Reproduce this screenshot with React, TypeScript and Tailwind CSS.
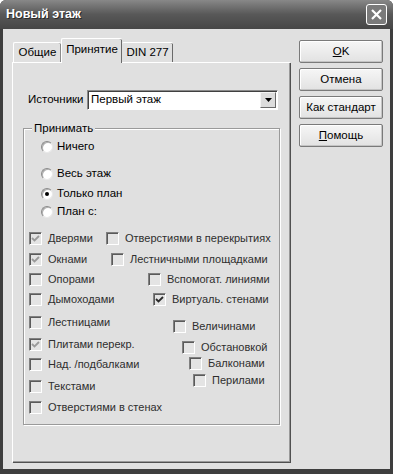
import React from "react";

type BoxProps = { label: string; checked?: boolean; strong?: boolean; className?: string };

const CheckBox: React.FC<BoxProps> = ({ label, checked, strong, className = "" }) => (
    <div className={`flex h-[13px] items-center gap-[6px] whitespace-nowrap ${className}`}>
        <span className="flex h-[13px] w-[13px] shrink-0 items-center justify-center border border-t-[#808080] border-l-[#808080] border-r-white border-b-white bg-[#e4e4e4] shadow-[inset_1px_1px_0_#5a5a5a]">
            {checked && (
                <svg width="9" height="9" viewBox="0 0 9 9">
                    <path d="M1 4 L3.5 6.5 L8 2" fill="none" stroke={strong ? "#2a2a2a" : "#9a9a9a"} strokeWidth="1.8" />
                </svg>
            )}
        </span>
        <span className="text-[11px] leading-none text-[#2e2e2e]">{label}</span>
    </div>
);

const Radio: React.FC<BoxProps> = ({ label, checked, className = "" }) => (
    <div className={`flex h-[12px] items-center gap-[4px] whitespace-nowrap ${className}`}>
        <span className="flex h-[12px] w-[12px] shrink-0 items-center justify-center rounded-full border border-t-[#8a8a8a] border-l-[#8a8a8a] border-r-[#e8e8e8] border-b-[#e8e8e8] bg-white shadow-[inset_1px_1px_0_#b0b0b0]">
            {checked && <span className="h-[4px] w-[4px] rounded-full bg-black" />}
        </span>
        <span className="text-[11.5px] leading-none text-black">{label}</span>
    </div>
);

const Btn: React.FC<{ children: React.ReactNode }> = ({ children }) => (
    <button className="flex h-[23px] w-[84px] items-center justify-center rounded-[2px] border border-[#7a7a7a] bg-gradient-to-b from-[#f6f6f6] to-[#e2e2e2] text-[11.5px] text-black shadow-[inset_-1px_-1px_0_#c4c4c4,inset_1px_1px_0_#fff]">
        {children}
    </button>
);

export default function App() {
    return (
        <div className="flex h-[474px] w-[393px] flex-col overflow-hidden rounded-t-[6px] bg-[#3e3e3e] font-['Liberation_Sans',Arial,sans-serif]">
            <div className="flex h-[29px] shrink-0 items-center justify-between bg-gradient-to-b from-[#888888] via-[#585858] to-[#464646] pl-[6px] pr-[6px]">
                <span className="text-[12.5px] font-bold text-white [text-shadow:1px_1px_0_#2a2a2a]">Новый этаж</span>
                <span className="flex h-[21px] w-[21px] items-center justify-center rounded-[3px] border border-white bg-[#7a7a7a]">
                    <svg width="13" height="13" viewBox="0 0 13 13">
                        <path d="M2 2 L11 11 M11 2 L2 11" stroke="#fff" strokeWidth="2.2" />
                    </svg>
                </span>
            </div>

            <div className="mx-[3px] mb-[5px] flex flex-1 gap-[9px] bg-[#e0e0e0] pl-[9px] pr-[6px] pt-[9px] pb-[7px]">
                <div className="flex w-[278px] flex-col">
                    <div className="flex h-[24px] items-end pl-[1px]">
                        <div className="flex h-[20px] w-[48px] items-center justify-center rounded-t-[2px] border-l border-t border-white shadow-[inset_-1px_0_0_#8a8a8a] text-[11.5px]">
                            Общие
                        </div>
                        <div className="relative z-10 -mb-[1px] flex h-[25px] w-[61px] items-center justify-center rounded-t-[2px] border-l border-t border-white bg-[#e0e0e0] pb-[3px] shadow-[inset_-1px_0_0_#6a6a6a] text-[11.5px]">
                            Принятие
                        </div>
                        <div className="flex h-[20px] w-[51px] items-center justify-center rounded-t-[2px] border-t border-white shadow-[inset_-1px_0_0_#6a6a6a] text-[11.5px]">
                            DIN 277
                        </div>
                    </div>

                    <div className="flex flex-1 flex-col border-l border-t border-white px-[10px] shadow-[inset_-1px_-1px_0_#9a9a9a,1px_1px_0_#505050]">
                        <div className="mt-[27px] flex items-center">
                            <span className="ml-[5px] w-[59px] text-[11.5px]">Источники</span>
                            <div className="flex h-[20px] w-[191px] items-center border border-t-[#8a8a8a] border-l-[#8a8a8a] border-r-white border-b-white bg-white shadow-[inset_1px_1px_0_#404040]">
                                <span className="ml-[3px] flex-1 text-[11.5px]">Первый этаж</span>
                                <span className="mr-[1px] flex h-[16px] w-[16px] items-center justify-center border border-t-[#f4f4f4] border-l-[#f4f4f4] border-r-[#6a6a6a] border-b-[#6a6a6a] bg-[#dcdcdc]">
                                    <svg width="7" height="4" viewBox="0 0 7 4">
                                        <path d="M0 0 H7 L3.5 4 Z" fill="#000" />
                                    </svg>
                                </span>
                            </div>
                        </div>

                        <div className="relative mt-[18px] flex h-[297px] flex-col border border-[#9a9a9a] shadow-[inset_1px_1px_0_#fff,1px_1px_0_#fff]">
                            <span className="absolute -top-[8px] left-[8px] bg-[#e0e0e0] px-[2px] text-[11.5px] leading-[14px]">Принимать</span>

                            <div className="ml-[17px] mt-[12px] flex flex-col">
                                <Radio label="Ничего" />
                                <Radio label="Весь этаж" className="mt-[15px]" />
                                <Radio label="Только план" checked className="mt-[8px]" />
                                <Radio label="План с:" className="mt-[6px]" />
                            </div>

                            <div className="mt-[14px] flex">
                                <div className="ml-[5px] flex w-[77px] flex-col">
                                    <CheckBox label="Дверями" checked />
                                    <CheckBox label="Окнами" checked className="mt-[8px]" />
                                    <CheckBox label="Опорами" className="mt-[7px]" />
                                    <CheckBox label="Дымоходами" className="mt-[7px]" />
                                    <CheckBox label="Лестницами" className="mt-[10px]" />
                                    <CheckBox label="Плитами перекр." checked className="mt-[9px]" />
                                    <CheckBox label="Над. /подбалками" className="mt-[7px]" />
                                    <CheckBox label="Текстами" className="mt-[9px]" />
                                    <CheckBox label="Отверстиями в стенах" className="mt-[8px]" />
                                </div>
                                <div className="flex flex-col">
                                    <CheckBox label="Отверстиями в перекрытиях" />
                                    <CheckBox label="Лестничными площадками" className="ml-[5px] mt-[8px]" />
                                    <CheckBox label="Вспомогат. линиями" className="ml-[42px] mt-[7px]" />
                                    <CheckBox label="Виртуаль. стенами" checked strong className="ml-[47px] mt-[7px]" />
                                    <CheckBox label="Величинами" className="ml-[67px] mt-[14px]" />
                                    <CheckBox label="Обстановкой" className="ml-[76px] mt-[8px]" />
                                    <CheckBox label="Балконами" className="ml-[83px] mt-[3px]" />
                                    <CheckBox label="Перилами" className="ml-[87px] mt-[4px]" />
                                </div>
                            </div>
                        </div>
                    </div>
                </div>

                <div className="flex flex-col gap-[5px] pt-[2px]">
                    <Btn>
                        <span className="underline">O</span>K
                    </Btn>
                    <Btn>Отмена</Btn>
                    <Btn>Как стандарт</Btn>
                    <Btn>
                        <span className="underline">П</span>омощь
                    </Btn>
                </div>
            </div>
        </div>
    );
}
